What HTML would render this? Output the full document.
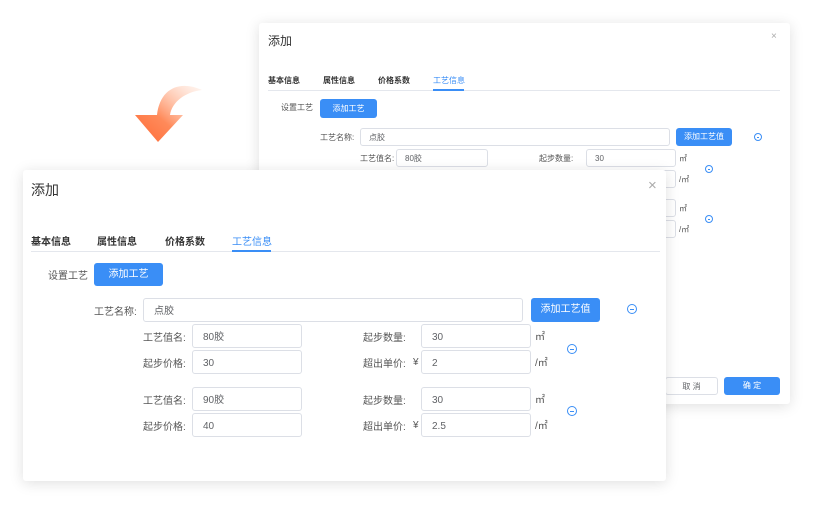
<!DOCTYPE html>
<html><head><meta charset="utf-8"><style>
*{margin:0;padding:0;box-sizing:border-box}
body{width:814px;height:506px;background:#fff;position:relative;overflow:hidden;font-family:"Liberation Sans","Noto Sans CJK SC",sans-serif;color:#555}
.a{position:absolute;white-space:nowrap}
.dlg{position:absolute;background:#fff;box-shadow:0 2px 14px rgba(0,0,0,.13);border-radius:3px}
.inp{position:absolute;border:1px solid #dcdfe6;border-radius:3px;background:#fff;color:#606266;white-space:nowrap}
.s .inp{padding:1px 8px 0;line-height:16px}
.f .inp{padding:2px 10px 0;line-height:22px}
.btn{position:absolute;background:#3a8ef6;color:#fff;border-radius:3px;text-align:center}
.circ{position:absolute;border:1px solid #3a8ef6;border-radius:50%}
.circ:after{content:"";position:absolute;left:2px;right:2px;top:50%;height:1px;background:#3a8ef6;margin-top:-.5px}
</style></head><body>
<svg class="a" style="left:130px;top:80px" width="80" height="65" viewBox="0 0 80 65">
<defs><linearGradient id="g" x1="1" y1="0" x2="0" y2="1"><stop offset="0" stop-color="#ffe0d0" stop-opacity=".3"/><stop offset=".6" stop-color="#ff8a5a"/><stop offset="1" stop-color="#ff6a35"/></linearGradient></defs>
<path d="M72 10 C50 0 30 8 27 35 L5 35 L28 62 L53 35 L40 35 C42 22 55 12 72 10 Z" fill="url(#g)"/></svg>

<div class="dlg s" style="left:259px;top:23px;width:531px;height:381px;font-size:8px">
<div class="a" style="left:9px;top:9px;font-size:12px;color:#333">添加</div>
<div class="a" style="left:512px;top:8px;font-size:10px;color:#aaa">×</div>
<div class="a" style="left:9px;top:52px;font-weight:bold;color:#333">基本信息</div>
<div class="a" style="left:64px;top:52px;font-weight:bold;color:#333">属性信息</div>
<div class="a" style="left:119px;top:52px;font-weight:bold;color:#333">价格系数</div>
<div class="a" style="left:174px;top:52px;color:#3a8ef6">工艺信息</div>
<div class="a" style="left:9px;top:67px;width:512px;height:1px;background:#e4e7ed"></div>
<div class="a" style="left:174px;top:66px;width:31px;height:2px;background:#3a8ef6"></div>
<div class="a" style="left:22px;top:79px">设置工艺</div>
<div class="btn" style="left:61px;top:76px;width:57px;height:19px;line-height:19px">添加工艺</div>
<div class="a" style="left:61px;top:109px">工艺名称:</div>
<div class="inp" style="left:101px;top:105px;width:310px;height:18px">点胶</div>
<div class="btn" style="left:417px;top:105px;width:56px;height:18px;line-height:18px">添加工艺值</div>
<div class="circ" style="left:495px;top:110px;width:8px;height:8px"></div>
<div class="a" style="left:101px;top:130px">工艺值名:</div>
<div class="inp" style="left:137px;top:126px;width:92px;height:18px">80胶</div>
<div class="a" style="left:280px;top:130px">起步数量:</div>
<div class="inp" style="left:327px;top:126px;width:90px;height:18px">30</div>
<div class="a" style="left:420px;top:130px">㎡</div>
<div class="inp" style="left:327px;top:147px;width:90px;height:18px"></div>
<div class="a" style="left:420px;top:151px">/㎡</div>
<div class="circ" style="left:446px;top:142px;width:8px;height:8px"></div>
<div class="inp" style="left:327px;top:176px;width:90px;height:18px"></div>
<div class="a" style="left:420px;top:180px">㎡</div>
<div class="inp" style="left:327px;top:197px;width:90px;height:18px"></div>
<div class="a" style="left:420px;top:201px">/㎡</div>
<div class="circ" style="left:446px;top:192px;width:8px;height:8px"></div>
<div class="inp" style="left:406px;top:354px;width:53px;height:18px;text-align:center">取 消</div>
<div class="btn" style="left:465px;top:354px;width:56px;height:18px;line-height:18px">确 定</div>
</div>

<div class="dlg f" style="left:23px;top:170px;width:643px;height:311px;font-size:10px">
<div class="a" style="left:8px;top:10px;font-size:14px;color:#333">添加</div>
<div class="a" style="left:625px;top:7px;font-size:15px;color:#aaa">×</div>
<div class="a" style="left:8px;top:63px;font-weight:bold;color:#333">基本信息</div>
<div class="a" style="left:74px;top:63px;font-weight:bold;color:#333">属性信息</div>
<div class="a" style="left:142px;top:63px;font-weight:bold;color:#333">价格系数</div>
<div class="a" style="left:209px;top:63px;color:#3a8ef6">工艺信息</div>
<div class="a" style="left:8px;top:81px;width:629px;height:1px;background:#e4e7ed"></div>
<div class="a" style="left:209px;top:80px;width:39px;height:2px;background:#3a8ef6"></div>
<div class="a" style="left:25px;top:97px">设置工艺</div>
<div class="btn" style="left:71px;top:93px;width:69px;height:23px;line-height:23px">添加工艺</div>
<div class="a" style="left:71px;top:133px">工艺名称:</div>
<div class="inp" style="left:120px;top:128px;width:380px;height:24px">点胶</div>
<div class="btn" style="left:508px;top:128px;width:69px;height:24px;line-height:24px">添加工艺值</div>
<div class="circ" style="left:604px;top:134px;width:10px;height:10px"></div>

<div class="a" style="left:120px;top:159px">工艺值名:</div>
<div class="inp" style="left:169px;top:154px;width:110px;height:24px">80胶</div>
<div class="a" style="left:340px;top:159px">起步数量:</div>
<div class="inp" style="left:398px;top:154px;width:110px;height:24px">30</div>
<div class="a" style="left:512px;top:158px">㎡</div>
<div class="a" style="left:120px;top:185px">起步价格:</div>
<div class="inp" style="left:169px;top:180px;width:110px;height:24px">30</div>
<div class="a" style="left:340px;top:185px">超出单价:</div>
<div class="a" style="left:390px;top:187px">¥</div>
<div class="inp" style="left:398px;top:180px;width:110px;height:24px">2</div>
<div class="a" style="left:512px;top:184px">/㎡</div>
<div class="circ" style="left:544px;top:174px;width:10px;height:10px"></div>

<div class="a" style="left:120px;top:222px">工艺值名:</div>
<div class="inp" style="left:169px;top:217px;width:110px;height:24px">90胶</div>
<div class="a" style="left:340px;top:222px">起步数量:</div>
<div class="inp" style="left:398px;top:217px;width:110px;height:24px">30</div>
<div class="a" style="left:512px;top:221px">㎡</div>
<div class="a" style="left:120px;top:248px">起步价格:</div>
<div class="inp" style="left:169px;top:243px;width:110px;height:24px">40</div>
<div class="a" style="left:340px;top:248px">超出单价:</div>
<div class="a" style="left:390px;top:250px">¥</div>
<div class="inp" style="left:398px;top:243px;width:110px;height:24px">2.5</div>
<div class="a" style="left:512px;top:247px">/㎡</div>
<div class="circ" style="left:544px;top:236px;width:10px;height:10px"></div>
</div>
</body></html>
